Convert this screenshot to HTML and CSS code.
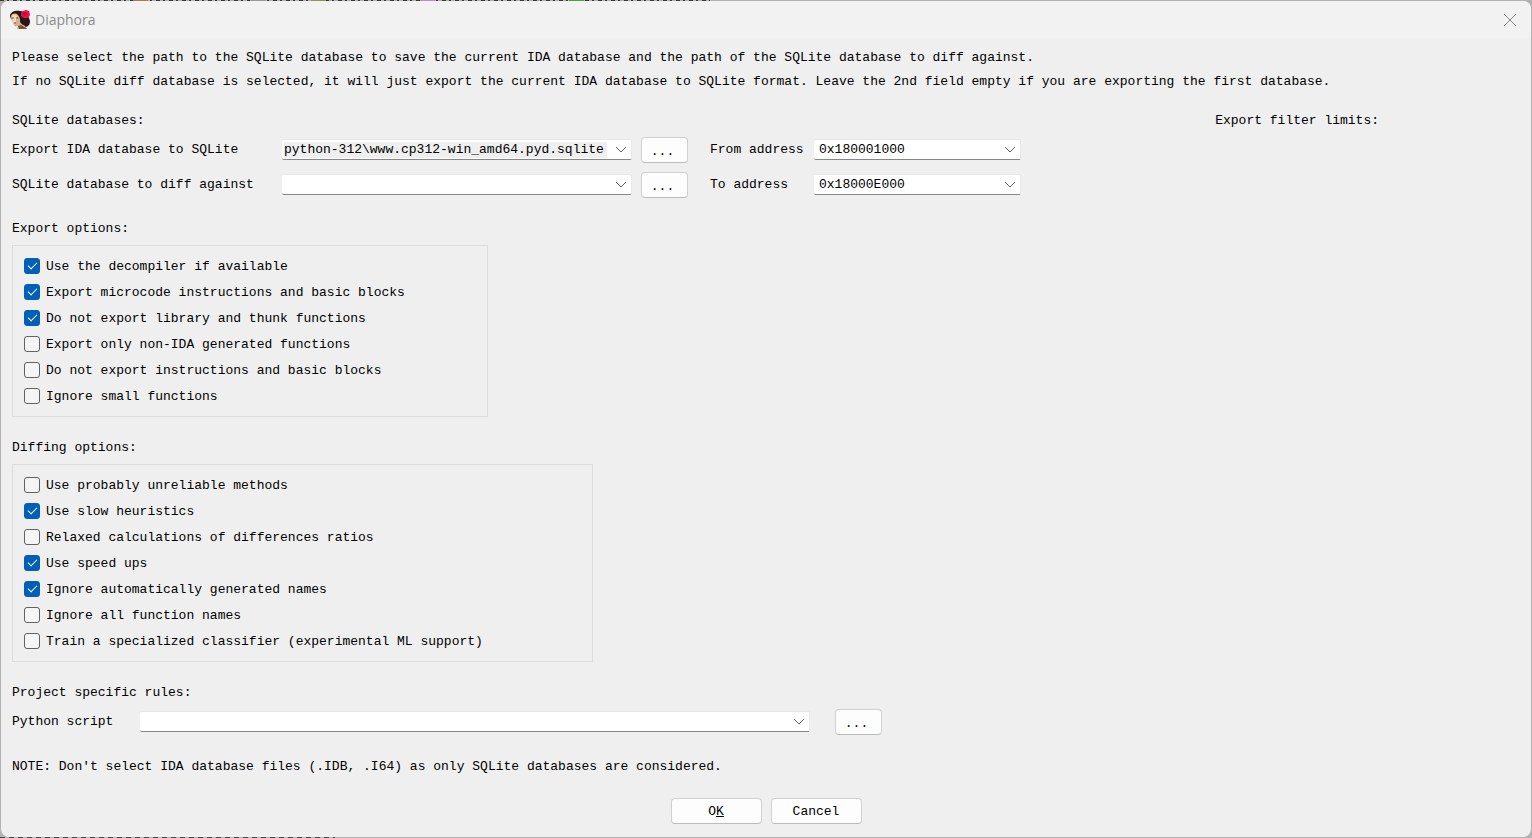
FILE: index.html
```html
<!DOCTYPE html>
<html lang="en">
<head>
  <meta charset="UTF-8" />
  <meta name="viewport" content="width=device-width, initial-scale=1.0">
  <title>Diaphora</title>
  <link rel="stylesheet" href="styles.css">
</head>
<body>
  <div class="dialog">
    <header class="titlebar">
      <svg class="logo" width="20" height="20" viewBox="0 0 20 20">
        <path d="M0 6 C0 2 5 0 10 1 C15 1 19 6 20 11 C20 15 18 17 14 17 L8 12 L1 9 Z" fill="#251a18" />
        <path d="M1 6 C2 3 6 3 8 5 C10 7 10 10 11 13 L15 16 L17 19 L7 19 L8 16 C5 17 4 16 3 13 C2 11 1 9 1 6 Z" fill="#d8b08c" />
        <path d="M2 6 C3 4 6 4 7 6 L6 11 L5 15 C3 13 2 10 2 6 Z" fill="#f3dbbf" />
        <path d="M2 8 L4 8 M6 8 L8 8 M4 13 L6 13" stroke="#6b4234" />
        <path d="M8 4 C10 7 11 8 10 12 L13 15 L18 14 L16 5 Z" fill="#251a18" />
        <path d="M8 16 L11 15 L16 18 L17 19 L9 19 Z" fill="#795139" />
        <path d="M13 1 L16 0 L19 1 L20 5 L18 8 L14 8 L11 6 L11 3 Z" fill="#f30b47" />
        <path d="M12 4 L15 2 L18 4 L15 6 Z" fill="#c50739" />
      </svg>
      <span class="title">Diaphora</span>
      <button class="close-btn" aria-label="Close">
        <svg width="12" height="12" viewBox="0 0 12 12"><path d="M0 0 L12 12 M12 0 L0 12" /></svg>
      </button>
    </header>

    <form class="content">
      <p>Please select the path to the SQLite database to save the current IDA database and the path of the SQLite database to diff against.</p>
      <p>If no SQLite diff database is selected, it will just export the current IDA database to SQLite format. Leave the 2nd field empty if you are exporting the first database.</p>

      <div class="headings">
        <h2>SQLite databases:</h2>
        <h2>Export filter limits:</h2>
      </div>
      <div class="databases">
        <div class="row">
          <label class="path-label" for="exportDb">Export IDA database to SQLite</label>
          <div class="combo path-combo">
            <input type="text" id="exportDb" class="selected" value="python-312\www.cp312-win_amd64.pyd.sqlite" />
            <button type="button" class="arrow" aria-label="Recent export databases"><svg width="10" height="6" viewBox="0 0 10 6"><path d="M0 0 L5 5 L10 0" /></svg></button>
          </div>
          <button type="button" class="btn browse">...</button>
          <label class="address-label" for="fromAddress">From address</label>
          <div class="combo address-combo">
            <select id="fromAddress"><option>0x180001000</option></select>
            <svg class="chevron" width="10" height="6" viewBox="0 0 10 6"><path d="M0 0 L5 5 L10 0" /></svg>
          </div>
        </div>
        <div class="row">
          <label class="path-label" for="diffDb">SQLite database to diff against</label>
          <div class="combo path-combo">
            <input type="text" id="diffDb" />
            <button type="button" class="arrow" aria-label="Recent diff databases"><svg width="10" height="6" viewBox="0 0 10 6"><path d="M0 0 L5 5 L10 0" /></svg></button>
          </div>
          <button type="button" class="btn browse">...</button>
          <label class="address-label" for="toAddress">To address</label>
          <div class="combo address-combo">
            <select id="toAddress"><option>0x18000E000</option></select>
            <svg class="chevron" width="10" height="6" viewBox="0 0 10 6"><path d="M0 0 L5 5 L10 0" /></svg>
          </div>
        </div>
      </div>

      <h2>Export options:</h2>
      <div class="options export-options">
        <label><input type="checkbox" checked />Use the decompiler if available</label>
        <label><input type="checkbox" checked />Export microcode instructions and basic blocks</label>
        <label><input type="checkbox" checked />Do not export library and thunk functions</label>
        <label><input type="checkbox" />Export only non-IDA generated functions</label>
        <label><input type="checkbox" />Do not export instructions and basic blocks</label>
        <label><input type="checkbox" />Ignore small functions</label>
      </div>

      <h2>Diffing options:</h2>
      <div class="options diffing-options">
        <label><input type="checkbox" />Use probably unreliable methods</label>
        <label><input type="checkbox" checked />Use slow heuristics</label>
        <label><input type="checkbox" />Relaxed calculations of differences ratios</label>
        <label><input type="checkbox" checked />Use speed ups</label>
        <label><input type="checkbox" checked />Ignore automatically generated names</label>
        <label><input type="checkbox" />Ignore all function names</label>
        <label><input type="checkbox" />Train a specialized classifier (experimental ML support)</label>
      </div>

      <h2>Project specific rules:</h2>
      <div class="row script-row">
        <label class="script-label" for="pythonScript">Python script</label>
        <div class="combo script-combo">
          <input type="text" id="pythonScript" />
          <button type="button" class="arrow" aria-label="Recent scripts"><svg width="10" height="6" viewBox="0 0 10 6"><path d="M0 0 L5 5 L10 0" /></svg></button>
        </div>
        <button type="button" class="btn browse script-browse">...</button>
      </div>

      <p class="note">NOTE: Don't select IDA database files (.IDB, .I64) as only SQLite databases are considered.</p>

      <div class="actions">
        <button type="button" class="btn action">O<u>K</u></button>
        <button type="button" class="btn action">Cancel</button>
      </div>
    </form>
  </div>

  <script>
    // Long paths show their end, not their start
    const exportDb = document.getElementById('exportDb');
    exportDb.scrollLeft = exportDb.scrollWidth;
  </script>
</body>
</html>
```

FILE: styles.css
```css
* {
  box-sizing: border-box;
}

/* The window behind the dialog shows through along its edges */
body {
  margin: 0;
  padding: 1px;
  min-height: 100vh;
  display: flex;
  background:
    linear-gradient(90deg, transparent 133px, #a97860 133px 148px, transparent 148px 250px, #999 250px 265px, transparent 265px 311px, #94905f 311px 326px, transparent 326px 420px, #c08cc4 420px 435px, transparent 435px 569px, #47a04b 569px 584px, transparent 584px) top / 100% 1px no-repeat,
    repeating-linear-gradient(90deg, #383838 0 4px, #b2b2b2 4px 7px, #383838 7px 9px, #b2b2b2 9px 13px) top left / 710px 1px no-repeat,
    repeating-linear-gradient(90deg, #484848 0 5px, #b2b2b2 5px 9px) bottom left / 335px 1px no-repeat,
    #b2b2b2;
  font-family: "Liberation Mono", monospace;
  font-size: 13px;
  line-height: 26px;
  color: #000;
}

.dialog {
  flex: 1;
  background: #efefef;
  border-radius: 8px;
  overflow: hidden;
}

.titlebar {
  display: flex;
  align-items: center;
  height: 37px;
  padding: 0 15px 0 9px;
  background: #f2f2f2;
}

.title {
  flex: 1;
  margin-left: 5px;
  font-family: "Open Sans", sans-serif;
  font-size: 14px;
  color: #8c8c8c;
}

.close-btn {
  display: flex;
  padding: 0;
  border: none;
  background: none;
}

svg {
  overflow: visible;
}

.close-btn path {
  stroke: #868686;
  fill: none;
}

.content {
  padding: 8px 11px 12px;
}

p, h2 {
  margin: 0;
  font-size: 13px;
  font-weight: normal;
}

p {
  line-height: 24px;
}

.headings {
  display: flex;
  justify-content: space-between;
  margin: 14px 141px 3px 0;
}

.databases {
  display: flex;
  flex-direction: column;
  gap: 9px;
  margin-bottom: 18px;
}

.row {
  display: flex;
  height: 26px;
}

.path-label {
  width: 270px;
}

.address-label {
  width: 104px;
  margin-left: 22px;
}

.script-label {
  width: 128px;
}

.combo {
  display: flex;
  align-items: center;
  position: relative;
  height: 21px;
  margin-top: 2px;
  background: #fff;
  border: 1px solid #e8e8e8;
  border-left: none;
  border-bottom-color: #868686;
  border-radius: 2px;
}

.path-combo {
  width: 350px;
}

.address-combo {
  width: 207px;
}

.script-combo {
  width: 670px;
}

input, select, button {
  font: inherit;
  color: inherit;
}

.combo input {
  flex: 1;
  min-width: 0;
  height: 16px;
  margin-left: 2px;
  padding: 0;
  border: none;
  background: #fff;
  line-height: 16px;
  outline: none;
}

.combo input.selected {
  background: #efefef;
}

.combo select {
  width: 100%;
  height: 19px;
  padding: 1px 24px 0 5px;
  border: none;
  background: transparent;
  appearance: none;
  line-height: 18px;
}

.arrow {
  display: flex;
  align-items: center;
  justify-content: center;
  width: 24px;
  height: 19px;
  padding: 0 0 0 3px;
  border: none;
  background: none;
}

.chevron {
  position: absolute;
  right: 5px;
  top: 7px;
  pointer-events: none;
}

.combo path {
  stroke: #606060;
  fill: none;
}

.btn {
  height: 26px;
  padding: 2px 0 0;
  background: #fdfdfd;
  border: 1px solid #d0d0d0;
  border-bottom-color: #bcbcbc;
  border-radius: 4px;
  line-height: 22px;
}

.browse {
  width: 47px;
  margin-left: 9px;
  padding: 4px 4px 0 0;
  line-height: 20px;
}

.script-browse {
  margin-left: 25px;
}

.options {
  margin: 3px 0 18px;
  padding: 7px 11px;
  border: 1px solid #dcdcdc;
}

.export-options {
  max-width: 476px;
}

.diffing-options {
  max-width: 581px;
}

.options label {
  display: flex;
  gap: 6px;
  height: 26px;
  line-height: 28px;
}

.options input {
  appearance: none;
  width: 16px;
  height: 16px;
  margin: 5px 0 0;
  background: #f5f5f5;
  border: 1px solid #626262;
  border-radius: 3px;
}

.options input:checked {
  display: flex;
  align-items: center;
  justify-content: center;
  background: #005fb8;
  border-color: #005fb8;
}

.options input:checked::before {
  content: "";
  width: 8px;
  height: 4px;
  margin-bottom: 4px;
  border-left: 1px solid #fff;
  border-bottom: 1px solid #fff;
  transform: rotate(-45deg);
}

.script-row {
  margin: 3px 0 20px;
}

.actions {
  display: flex;
  justify-content: center;
  gap: 9px;
  margin-top: 19px;
}

.action {
  width: 91px;
}
```
